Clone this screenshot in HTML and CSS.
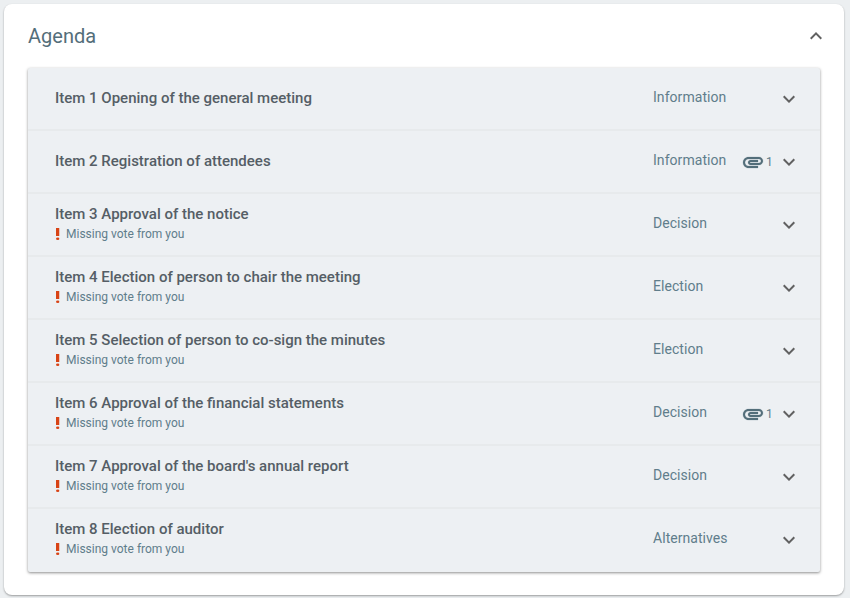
FILE: index.html
```html
<!DOCTYPE html>
<html lang="en">
<head>
<meta charset="utf-8">
<title>Agenda</title>
<link rel="stylesheet" href="styles.css">
</head>
<body>
<svg class="defs" width="0" height="0" aria-hidden="true">
  <symbol id="more" viewBox="0 0 24 24"><path d="M16.59 8.59L12 13.17 7.41 8.59 6 10l6 6 6-6z"/></symbol>
  <symbol id="less" viewBox="0 0 24 24"><path d="M12 8l-6 6 1.41 1.41L12 10.83l4.59 4.58L18 14z"/></symbol>
  <symbol id="clip" viewBox="0 0 24 24"><path d="M2 12.5C2 9.46 4.46 7 7.5 7H18c2.21 0 4 1.79 4 4s-1.79 4-4 4H9.5C8.12 15 7 13.88 7 12.5S8.12 10 9.5 10H17v2H9.41c-.55 0-.55 1 0 1H18c1.1 0 2-.9 2-2s-.9-2-2-2H7.5C5.57 9 4 10.57 4 12.5S5.57 16 7.5 16H17v2H7.5C4.46 18 2 15.54 2 12.5z"/></symbol>
  <symbol id="alert" viewBox="10 2 4 19.5" preserveAspectRatio="none"><circle cx="12" cy="19.5" r="2"/><path d="M10 2h4v13h-4z"/></symbol>
</svg>
<main class="card">
  <header class="card-head">
    <h1 class="card-title">Agenda</h1>
    <svg class="chev chev-head"><use href="#less"/></svg>
  </header>
  <section class="list">
    <div class="row">
      <div class="main"><div class="title">Item 1 Opening of the general meeting</div></div>
      <div class="type">Information</div>
      <div class="attach"></div>
      <svg class="chev"><use href="#more"/></svg>
    </div>
    <div class="row">
      <div class="main"><div class="title">Item 2 Registration of attendees</div></div>
      <div class="type">Information</div>
      <div class="attach"><svg class="clip"><use href="#clip"/></svg><span class="count">1</span></div>
      <svg class="chev"><use href="#more"/></svg>
    </div>
    <div class="row">
      <div class="main"><div class="title">Item 3 Approval of the notice</div><div class="note"><svg class="alert"><use href="#alert"/></svg>Missing vote from you</div></div>
      <div class="type">Decision</div>
      <div class="attach"></div>
      <svg class="chev"><use href="#more"/></svg>
    </div>
    <div class="row">
      <div class="main"><div class="title">Item 4 Election of person to chair the meeting</div><div class="note"><svg class="alert"><use href="#alert"/></svg>Missing vote from you</div></div>
      <div class="type">Election</div>
      <div class="attach"></div>
      <svg class="chev"><use href="#more"/></svg>
    </div>
    <div class="row">
      <div class="main"><div class="title">Item 5 Selection of person to co-sign the minutes</div><div class="note"><svg class="alert"><use href="#alert"/></svg>Missing vote from you</div></div>
      <div class="type">Election</div>
      <div class="attach"></div>
      <svg class="chev"><use href="#more"/></svg>
    </div>
    <div class="row">
      <div class="main"><div class="title">Item 6 Approval of the financial statements</div><div class="note"><svg class="alert"><use href="#alert"/></svg>Missing vote from you</div></div>
      <div class="type">Decision</div>
      <div class="attach"><svg class="clip"><use href="#clip"/></svg><span class="count">1</span></div>
      <svg class="chev"><use href="#more"/></svg>
    </div>
    <div class="row">
      <div class="main"><div class="title">Item 7 Approval of the board's annual report</div><div class="note"><svg class="alert"><use href="#alert"/></svg>Missing vote from you</div></div>
      <div class="type">Decision</div>
      <div class="attach"></div>
      <svg class="chev"><use href="#more"/></svg>
    </div>
    <div class="row">
      <div class="main"><div class="title">Item 8 Election of auditor</div><div class="note"><svg class="alert"><use href="#alert"/></svg>Missing vote from you</div></div>
      <div class="type">Alternatives</div>
      <div class="attach"></div>
      <svg class="chev"><use href="#more"/></svg>
    </div>
  </section>
</main>
</body>
</html>
```

FILE: styles.css
```css
* { box-sizing: border-box; }
html, body { height: 100%; }
body {
  margin: 0;
  padding: 4px 6px 3px 4px;
  background: #eceff1;
  font-family: Roboto, "Liberation Sans", sans-serif;
  overflow: hidden;
}
.defs { position: absolute; }
.card {
  height: 591px;
  padding: 0 24px;
  background: #fff;
  border-radius: 8px;
  box-shadow: 0 1px 2px rgba(0,0,0,.35);
}
.card-head {
  display: flex;
  align-items: center;
  justify-content: space-between;
  height: 64px;
  padding-bottom: 1px;
}
.card-title {
  margin: 0;
  font-size: 20px;
  line-height: 28px;
  font-weight: 400;
  color: #546e7a;
}
.chev { width: 24px; height: 24px; fill: #616161; flex: none; }
.chev-head { margin-right: -8px; }
.list {
  background: #edf0f3;
  border-radius: 2px;
  box-shadow: 0 1px 3px rgba(0,0,0,.45);
}
.row {
  display: flex;
  align-items: center;
  height: 63px;
  padding: 0 19px 0 27px;
  border-bottom: 2px solid #e7eaec;
}
.row:last-child { border-bottom-color: transparent; }
.main { flex: 1; min-width: 0; padding-bottom: 2px; }
.title {
  font-size: 15px;
  line-height: 20px;
  font-weight: 500;
  color: #555e66;
}
.note {
  display: flex;
  align-items: center;
  margin: 2px 0;
  font-size: 12px;
  line-height: 16px;
  color: #607d8b;
}
.alert { width: 3.5px; height: 12px; margin: 0 6.5px 0 1px; fill: #d84315; flex: none; }
.type {
  width: 90px;
  flex: none;
  font-size: 14px;
  line-height: 20px;
  color: #607d8b;
  margin-top: -3px;
  letter-spacing: .05px;
}
.attach {
  display: flex;
  align-items: center;
  width: 29px;
  height: 20px;
  margin-right: 5px;
  flex: none;
}
.clip {
  width: 24px;
  height: 24px;
  flex: none;
  margin-left: -2px;
  fill: #546e7a;
  stroke: #546e7a;
  stroke-width: .2;
}
.count { margin-left: 1px; font-size: 12px; color: #607d8b; }
```
